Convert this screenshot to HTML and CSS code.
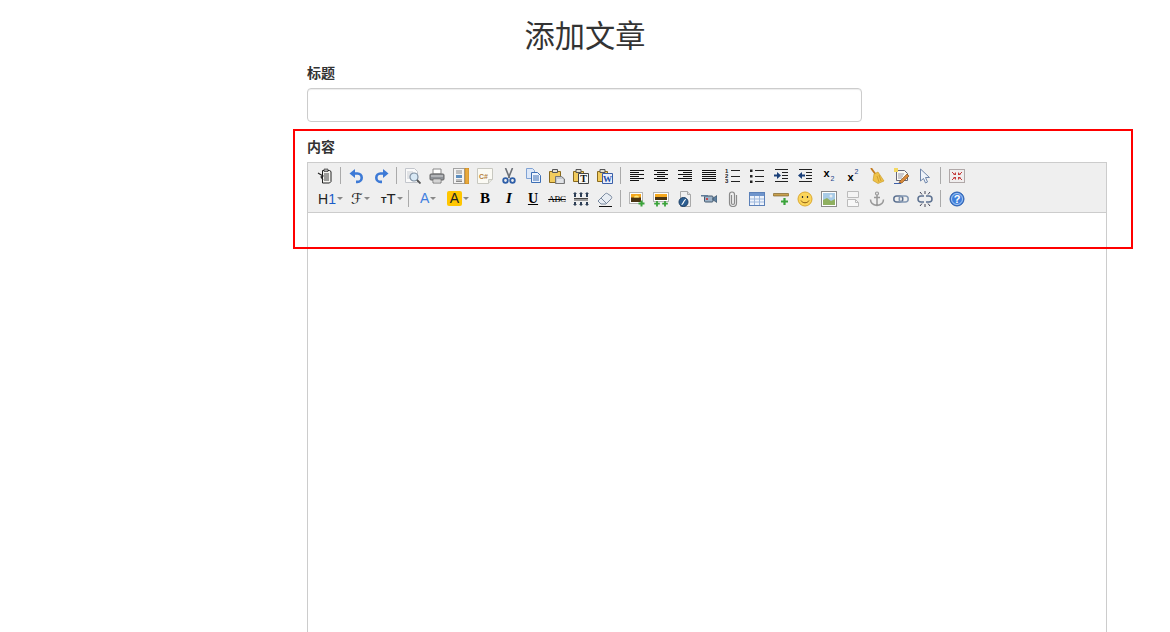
FILE: index.html
```html
<!DOCTYPE html>
<html lang="zh-CN">
<head>
    <meta charset="UTF-8">
    <title>添加文章</title>
    <link rel="stylesheet" href="styles.css">
</head>
<body>
<svg class="defs" width="0" height="0">
    <symbol id="i-template" viewBox="0 0 16 16"><path d="M5.500 2.500h7l1.500 1v10l-1.500 1.500h-7z" fill="#f4f4f0" stroke="#222"/><path d="M7 1h4v2.500H7z" fill="#aaa" stroke="#222" stroke-width=".6"/><path d="M7 6h5M7 8h5M7 10h5M7 12h5" stroke="#444"/><path d="M1 5l5 3-2 1 2 3" fill="none" stroke="#222" stroke-width="1.100"/></symbol>
    <symbol id="i-undo" viewBox="0 0 16 16"><path d="M5 5.500h3.500a4.200 4.200 0 0 1 0 8.400H7" fill="none" stroke="#3d7ad6" stroke-width="2.600"/><path d="M.5 5.500L6 1v9z" fill="#3d7ad6"/></symbol>
    <symbol id="i-redo" viewBox="0 0 16 16"><path d="M11 5.500H7.500a4.200 4.200 0 0 0 0 8.400H9" fill="none" stroke="#3d7ad6" stroke-width="2.600"/><path d="M15.500 5.500L10 1v9z" fill="#3d7ad6"/></symbol>
    <symbol id="i-preview" viewBox="0 0 16 16"><path d="M.5 .5h9l3 3v11H.500z" fill="#fafafa" stroke="#c3c6cc"/><path d="M2 4h6M2 6h4M2 8h3M2 10h3" stroke="#c8ccd2"/><circle cx="9" cy="9" r="4" fill="#d9e9f5" stroke="#7d8ea0" stroke-width="1.200"/><path d="M12 12l3.500 3.500" stroke="#555" stroke-width="1.800"/></symbol>
    <symbol id="i-print" viewBox="0 0 16 16"><path d="M4 1h8v5H4z" fill="#fff" stroke="#888"/><rect x="1" y="6" width="14" height="6" rx="1" fill="#8e9298" stroke="#666"/><path d="M2 8h12" stroke="#d8d8d8"/><path d="M4 11h8v4H4z" fill="#fff" stroke="#777"/><path d="M5 13h6" stroke="#aaa"/></symbol>
    <symbol id="i-ruler" viewBox="0 0 16 16"><path d="M.5 .5h11v15H.500z" fill="#f4f4f4" stroke="#555" stroke-dasharray="1 1"/><path d="M3 3h6M3 5h6M3 12h6M3 13.500h6" stroke="#888"/><rect x="3" y="7" width="6" height="3" fill="#5d8ebf"/><rect x="12" y="0" width="4" height="16" fill="#e8a93c" stroke="#b87c16" stroke-width=".6"/></symbol>
    <symbol id="i-cut" viewBox="0 0 16 16"><path d="M4.500 0l4 10M11.500 0l-4 10" stroke="#6d7178" stroke-width="1.600"/><circle cx="4.500" cy="12.500" r="2.300" fill="none" stroke="#2f5fa8" stroke-width="1.800"/><circle cx="11.500" cy="12.500" r="2.300" fill="none" stroke="#2f5fa8" stroke-width="1.800"/></symbol>
    <symbol id="i-copy" viewBox="0 0 16 16"><path d="M1.500 .5h6l2 2v8h-8z" fill="#dde8f8" stroke="#7fa2d4"/><path d="M6.500 4.500h6l3 3v7h-9z" fill="#eef4fd" stroke="#3d6fb5"/><path d="M8 8h6M8 10h6M8 12h6" stroke="#3d6fb5"/></symbol>
    <symbol id="i-paste" viewBox="0 0 16 16"><path d="M.5 3.500h11v11H.500z" fill="#f2cc5e" stroke="#8a6a1c"/><path d="M3.500 1.500h5v3h-5z" fill="#e4e0d0" stroke="#555"/><path d="M6.500 8.500h6l3 2.500v4.500h-9z" fill="#c4c8ce" stroke="#777"/><path d="M8 12h6M8 14h6" stroke="#fff"/></symbol>
    <symbol id="i-left" viewBox="0 0 16 16"><path d="M1 2.500h14M1 4.500h9M1 6.500h14M1 8.500h9M1 10.500h14M1 12.500h9" stroke="#111"/></symbol>
    <symbol id="i-center" viewBox="0 0 16 16"><path d="M1 2.500h14M4 4.500h8M1 6.500h14M4 8.500h8M1 10.500h14M4 12.500h8" stroke="#111"/></symbol>
    <symbol id="i-right" viewBox="0 0 16 16"><path d="M1 2.500h14M6 4.500h9M1 6.500h14M6 8.500h9M1 10.500h14M6 12.500h9" stroke="#111"/></symbol>
    <symbol id="i-just" viewBox="0 0 16 16"><path d="M1 2.500h14M1 4.500h14M1 6.500h14M1 8.500h14M1 10.500h14M1 12.500h14" stroke="#111"/></symbol>
    <symbol id="i-ul" viewBox="0 0 16 16"><path d="M1 1.500h2.500V4H1zM1 7h2.500v2.500H1zM1 12.500h2.500V15H1z" fill="#222"/><path d="M6 2.500h9M6 8.500h9M6 13.500h9" stroke="#222"/></symbol>
    <symbol id="i-indent" viewBox="0 0 16 16"><path d="M2 1.500h13M9 4.500h6M9 7.500h6M9 10.500h6M2 13.500h13" stroke="#222"/><path d="M1 6.500h3V4l4 3.500-4 3.500V8.500H1z" fill="#1a3f78"/></symbol>
    <symbol id="i-outdent" viewBox="0 0 16 16"><path d="M2 1.500h13M9 4.500h6M9 7.500h6M9 10.500h6M2 13.500h13" stroke="#222"/><path d="M8 6.500H5V4L1 7.500 5 11V8.500h3z" fill="#1a3f78"/></symbol>
    <symbol id="i-broom" viewBox="0 0 16 16"><path d="M2 0l5 7" stroke="#c27a1e" stroke-width="1.800"/><path d="M5 6l4-2 6 9-6 2.500-5-3z" fill="#efc24a" stroke="#c4951f" stroke-width=".6"/><path d="M8 8l2 6M10 7l2 6" stroke="#b98a1c" stroke-width=".6"/></symbol>
    <symbol id="i-note" viewBox="0 0 16 16"><path d="M3.500 2.500h8l3 3v7h-11z" fill="#fbfaf2" stroke="#667"/><path d="M5 6h6M5 8h5M5 10h4" stroke="#99a"/><path d="M1 0h4v4H1z" fill="#f4d860"/><path d="M7 13l7-7 2 2-7 7-3 0z" fill="#d98a3a" stroke="#7a4a18" stroke-width=".6"/><path d="M1 15.500h7" stroke="#3d5fa8"/></symbol>
    <symbol id="i-cursor" viewBox="0 0 16 16"><path d="M3.500 1v12l3-2.500 2 4.500 2-1-2-4.500h4z" fill="#eef3fa" stroke="#6f86aa"/></symbol>
    <symbol id="i-full" viewBox="0 0 16 16"><rect x=".5" y="1.500" width="15" height="13" fill="#f0eeee" stroke="#b0a8a8"/><path d="M3 4l2 2M13 4l-2 2M3 12l2-2M13 12l-2-2" stroke="#c43a3a"/><path d="M7 7H4l3-3zM9 7h3L9 4zM7 9H4l3 3zM9 9h3l-3 3z" fill="#c43a3a"/></symbol>
    <symbol id="i-spacing" viewBox="0 0 16 16"><path d="M1 7.500h14M1 9h14" stroke="#444"/><path d="M2 1l2 2H3v3H1V3H0zM8 1l2 2H9v3H7V3H6zM14 1l2 2h-1v3h-2V3h-1zM2 15l2-2H3v-2H1v2H0zM8 15l2-2H9v-2H7v2H6zM14 15l2-2h-1v-2h-2v2h-1z" fill="#2c3e55"/></symbol>
    <symbol id="i-eraser" viewBox="0 0 16 16"><path d="M1 10l7-7c1-1 2-1 3 0l3 2c1 1 1 2 0 3l-5 5H4z" fill="#e8edf3" stroke="#7a8aa0"/><path d="M4 7l5 5" stroke="#7a8aa0"/><path d="M2 15.500h13" stroke="#111"/></symbol>
    <symbol id="i-imgadd" viewBox="0 0 16 16"><rect x=".5" y="1.500" width="13" height="11" fill="#fff" stroke="#b5b5b5"/><rect x="2" y="3" width="10" height="8" fill="#4a3412"/><path d="M2 3h10v3.500H2z" fill="#f5a81e"/><path d="M5 6.500a2.500 2 0 0 1 5 0z" fill="#ffe97a"/><path d="M12.500 9.500v6M9.500 12.500h6" stroke="#3aa33a" stroke-width="2"/></symbol>
    <symbol id="i-imgsadd" viewBox="0 0 16 16"><rect x=".5" y="1.500" width="15" height="9" fill="#fff" stroke="#b5b5b5"/><rect x="2" y="3" width="12" height="6" fill="#4a3412"/><path d="M2 3h12v3H2z" fill="#f5a81e"/><path d="M4 10v5.500M1.200 12.700h5.600M12 10v5.500M9.200 12.700h5.600" stroke="#3aa33a" stroke-width="1.800"/></symbol>
    <symbol id="i-flash" viewBox="0 0 16 16"><path d="M3.500 .5h7l3 3v12h-10z" fill="#f0f0f0" stroke="#a9a9a9"/><path d="M10.500 .5v3h3" fill="#ddd" stroke="#a9a9a9"/><circle cx="6.500" cy="11" r="4.500" fill="#2d5f92" stroke="#1e3f66"/><path d="M4.500 13.500c2 0 2-5 4.500-5" fill="none" stroke="#fff" stroke-width="1.200"/></symbol>
    <symbol id="i-video" viewBox="0 0 16 16"><rect x="3.500" y="5" width="8.500" height="6" rx="1" fill="#9db3c8" stroke="#445a70"/><path d="M12 7l4-2.500v7L12 9z" fill="#5d7f9f" stroke="#34495e" stroke-width=".6"/><path d="M0 4h7v1.500H0z" fill="#5f7c99"/><circle cx="6" cy="8" r="1.100" fill="#c33"/></symbol>
    <symbol id="i-clip" viewBox="0 0 16 16"><path d="M6.500 4v8a1.500 1.500 0 0 0 3 0V3.500a2.500 2.500 0 0 0-5 0V12a3.500 3.500 0 0 0 7 0V4" fill="none" stroke="#8a8a8a" stroke-width="1.200"/></symbol>
    <symbol id="i-table" viewBox="0 0 16 16"><rect x=".5" y="1.500" width="15" height="13" fill="#eef3fb" stroke="#5b80b8"/><path d="M1 2h14v3H1z" fill="#6f95cc"/><path d="M5.500 5v9M10.500 5v9M1 8h14M1 11h14" stroke="#9db7dc"/></symbol>
    <symbol id="i-hr" viewBox="0 0 16 16"><rect x="0" y="2.500" width="16" height="2.500" rx="1" fill="#c8a050" stroke="#6b5218" stroke-width=".6"/><path d="M11.500 7v7M8 10.500h7" stroke="#3aa33a" stroke-width="2.200"/></symbol>
    <symbol id="i-smile" viewBox="0 0 16 16"><circle cx="8" cy="8" r="7" fill="#fbd55a" stroke="#dca92f"/><path d="M5.500 5v2M10.500 5v2" stroke="#333" stroke-width="1.200"/><path d="M4 9.500c1.500 3 6.500 3 8 0" fill="none" stroke="#8a5a12"/></symbol>
    <symbol id="i-image" viewBox="0 0 16 16"><rect x=".5" y=".5" width="15" height="15" fill="#fff" stroke="#8a8a8a"/><rect x="2" y="2" width="12" height="12" fill="#a8cbe6"/><path d="M2 14V9l4-2 4 3 4-2v6z" fill="#8fb060"/><circle cx="10" cy="5" r="1.500" fill="#e7edf2"/></symbol>
    <symbol id="i-break" viewBox="0 0 16 16"><path d="M2.500 .5h11v6h-11z" fill="#f4f4f4" stroke="#bbb"/><path d="M2.500 8.500h8l3 3v4h-11z" fill="#f8f8f8" stroke="#bbb"/><path d="M10.500 8.500v3h3" fill="none" stroke="#bbb"/></symbol>
    <symbol id="i-anchor" viewBox="0 0 16 16"><circle cx="8" cy="2.500" r="1.500" fill="none" stroke="#999" stroke-width="1.200"/><path d="M8 4v10M5 6.500h6M1.500 8.500c0 4 3 5.500 6.500 6 3.500-.5 6.500-2 6.500-6" fill="none" stroke="#999" stroke-width="1.500"/></symbol>
    <symbol id="i-link" viewBox="0 0 16 16"><rect x=".8" y="5" width="9" height="6" rx="3" fill="none" stroke="#5d7291" stroke-width="1.500"/><rect x="6.200" y="5" width="9" height="6" rx="3" fill="none" stroke="#8498b3" stroke-width="1.500"/></symbol>
    <symbol id="i-unlink" viewBox="0 0 16 16"><path d="M7 5H4a3 3 0 0 0 0 6h3M9 5h3a3 3 0 0 1 0 6H9" fill="none" stroke="#5d7291" stroke-width="1.500"/><path d="M8 0v3M8 13v3M3 1l2 2.500M13 1l-2 2.500M3 15l2-2.500M13 15l-2-2.500" stroke="#445"/></symbol>
</svg>

<h1 class="page-title">添加文章</h1>
<form class="post-form">
    <div class="field">
        <label class="field-label">标题</label>
        <input class="field-input" type="text">
    </div>
    <div class="field">
        <label class="field-label">内容</label>
        <div class="editor">
            <div class="toolbar">
                <div class="toolbar-row">
                    <span class="btn"><svg><use href="#i-template"/></svg></span>
                    <span class="sep"></span>
                    <span class="btn"><svg><use href="#i-undo"/></svg></span>
                    <span class="btn"><svg><use href="#i-redo"/></svg></span>
                    <span class="sep"></span>
                    <span class="btn"><svg><use href="#i-preview"/></svg></span>
                    <span class="btn"><svg><use href="#i-print"/></svg></span>
                    <span class="btn"><svg><use href="#i-ruler"/></svg></span>
                    <span class="btn"><svg viewBox="0 0 16 16"><path d="M.5 .5h15v11l-4 4H.500z" fill="#fbfaf4" stroke="#c8c8c0"/><path d="M11.500 15.500v-4h4" fill="#e6e6df" stroke="#c8c8c0"/><text x="2" y="10.500" class="svg-code">C#</text></svg></span>
                    <span class="btn"><svg><use href="#i-cut"/></svg></span>
                    <span class="btn"><svg><use href="#i-copy"/></svg></span>
                    <span class="btn"><svg><use href="#i-paste"/></svg></span>
                    <span class="btn"><svg viewBox="0 0 16 16"><path d="M.5 3.500h10v10H.500z" fill="#f2cc5e" stroke="#8a6a1c"/><path d="M3 1.500h5v3H3z" fill="#e4e0d0" stroke="#555"/><path d="M5.500 5.500h10v10h-10z" fill="#f8f8f4" stroke="#444"/><text x="10.500" y="14" class="svg-paste">T</text></svg></span>
                    <span class="btn"><svg viewBox="0 0 16 16"><path d="M.5 3.500h10v10H.500z" fill="#f2cc5e" stroke="#8a6a1c"/><path d="M3 1.500h5v3H3z" fill="#e4e0d0" stroke="#555"/><path d="M5.500 5.500h10v10h-10z" fill="#e9eefa" stroke="#3a5ea8"/><text x="10.500" y="14" class="svg-paste svg-blue">W</text></svg></span>
                    <span class="sep"></span>
                    <span class="btn"><svg><use href="#i-left"/></svg></span>
                    <span class="btn"><svg><use href="#i-center"/></svg></span>
                    <span class="btn"><svg><use href="#i-right"/></svg></span>
                    <span class="btn"><svg><use href="#i-just"/></svg></span>
                    <span class="btn"><svg viewBox="0 0 16 16"><text x="0" y="5" class="svg-num">1</text><text x="0" y="10" class="svg-num">2</text><text x="0" y="15" class="svg-num">3</text><path d="M6 2.500h9M6 8.500h9M6 13.500h9" stroke="#222"/></svg></span>
                    <span class="btn"><svg><use href="#i-ul"/></svg></span>
                    <span class="btn"><svg><use href="#i-indent"/></svg></span>
                    <span class="btn"><svg><use href="#i-outdent"/></svg></span>
                    <span class="btn script-btn script-sub"><b>x</b><sub>2</sub></span>
                    <span class="btn script-btn script-sup"><b>x</b><sup>2</sup></span>
                    <span class="btn"><svg><use href="#i-broom"/></svg></span>
                    <span class="btn"><svg><use href="#i-note"/></svg></span>
                    <span class="btn"><svg><use href="#i-cursor"/></svg></span>
                    <span class="sep"></span>
                    <span class="btn"><svg><use href="#i-full"/></svg></span>
                </div>
                <div class="toolbar-row">
                    <span class="combo combo-wide combo-h">H<b>1</b><i class="caret"></i></span>
                    <span class="combo combo-wide combo-f">ℱ<i class="caret"></i></span>
                    <span class="combo combo-t"><small>T</small>T<i class="caret"></i></span>
                    <span class="sep"></span>
                    <span class="combo combo-color"><span class="swatch">A</span><i class="caret"></i></span>
                    <span class="combo combo-mark"><span class="swatch">A</span><i class="caret"></i></span>
                    <span class="btn glyph bold">B</span>
                    <span class="btn glyph italic">I</span>
                    <span class="btn glyph under">U</span>
                    <span class="btn glyph strike">ABC</span>
                    <span class="btn"><svg><use href="#i-spacing"/></svg></span>
                    <span class="btn"><svg><use href="#i-eraser"/></svg></span>
                    <span class="sep"></span>
                    <span class="btn"><svg><use href="#i-imgadd"/></svg></span>
                    <span class="btn"><svg><use href="#i-imgsadd"/></svg></span>
                    <span class="btn"><svg><use href="#i-flash"/></svg></span>
                    <span class="btn"><svg><use href="#i-video"/></svg></span>
                    <span class="btn"><svg><use href="#i-clip"/></svg></span>
                    <span class="btn"><svg><use href="#i-table"/></svg></span>
                    <span class="btn"><svg><use href="#i-hr"/></svg></span>
                    <span class="btn"><svg><use href="#i-smile"/></svg></span>
                    <span class="btn"><svg><use href="#i-image"/></svg></span>
                    <span class="btn"><svg><use href="#i-break"/></svg></span>
                    <span class="btn"><svg><use href="#i-anchor"/></svg></span>
                    <span class="btn"><svg><use href="#i-link"/></svg></span>
                    <span class="btn"><svg><use href="#i-unlink"/></svg></span>
                    <span class="sep"></span>
                    <span class="btn"><svg viewBox="0 0 16 16"><circle cx="8" cy="8" r="7" fill="#3f7fdc" stroke="#2a5cab"/><circle cx="8" cy="8" r="5.500" fill="none" stroke="#a9c9f2"/><text x="8" y="11.500" class="svg-help">?</text></svg></span>
                </div>
            </div>
            <div class="editor-body"></div>
        </div>
    </div>
</form>
<div class="highlight-box"></div>
</body>
</html>
```

FILE: styles.css
```css
html, body {
    height: 632px;
    overflow: hidden;
}
body {
    margin: 0;
    position: relative;
    background-color: #fff;
    color: #333;
    font-family: "Liberation Sans", "Noto Sans CJK SC", sans-serif;
    font-size: 14px;
}
.defs {
    position: absolute;
}
.page-title {
    margin: 0;
    padding-top: 16px;
    height: 47px;
    line-height: 42px;
    text-align: center;
    font-size: 30.25px;
    font-weight: 400;
}
.post-form {
    width: 800px;
    margin-left: 307px;
}
.field {
    margin-bottom: 15px;
}
.field-label {
    display: block;
    height: 25px;
    line-height: 20px;
    font-weight: 700;
    font-size: 14px;
}
.field-input {
    display: block;
    box-sizing: border-box;
    width: 555px;
    height: 34px;
    border: 1px solid #ccc;
    border-radius: 4px;
    box-shadow: inset 0 1px 1px rgba(0, 0, 0, 0.075);
}
.editor {
    border: 1px solid #ccc;
    box-sizing: border-box;
}
.toolbar {
    height: 50px;
    box-sizing: border-box;
    padding: 1px 0 0 5px;
    background-color: #efefef;
    border-bottom: 1px solid #ccc;
}
.toolbar-row {
    display: flex;
    height: 23px;
    align-items: center;
}
.btn {
    display: flex;
    flex: none;
    align-items: center;
    justify-content: center;
    width: 24px;
    height: 20px;
    color: #111;
}
.btn svg {
    width: 16px;
    height: 16px;
}
.sep {
    flex: none;
    width: 8px;
    height: 17px;
    background: linear-gradient(#aaa, #aaa) 3px 0 / 1px 100% no-repeat;
}
.combo {
    display: flex;
    flex: none;
    box-sizing: border-box;
    align-items: center;
    width: 30px;
    height: 20px;
    color: #222;
}
.combo-wide {
    width: 31px;
}
.caret {
    flex: none;
    width: 0;
    height: 0;
    margin-left: 1px;
    border: 3px solid transparent;
    border-top: 3px solid #888;
    border-bottom: 0;
}
.combo-h {
    padding-left: 5px;
    font-size: 14px;
}
.combo-h b {
    font-weight: 400;
    color: #1a5cc8;
}
.combo-f {
    padding-left: 7px;
    font-family: "DejaVu Serif", "DejaVu Sans", serif;
    font-size: 15px;
}
.combo-t {
    padding-left: 6px;
    font-size: 15px;
}
.combo-t small {
    font-size: 9px;
    font-weight: 700;
    line-height: 1;
    margin-top: 4px;
}
.combo-color {
    padding-left: 7px;
}
.combo-mark {
    padding-left: 4px;
}
.swatch {
    display: block;
    font-size: 14px;
    line-height: 15px;
    text-align: center;
    color: #3f7ee0;
}
.combo-mark .swatch {
    width: 15px;
    border-radius: 2px;
    background-color: #ffc600;
    color: #222;
}
.glyph {
    font-family: "Liberation Serif", serif;
}
.bold {
    font-size: 15px;
    font-weight: 700;
    color: #000;
}
.italic {
    font-size: 15px;
    font-weight: 700;
    font-style: italic;
    color: #000;
}
.under {
    font-size: 14px;
    font-weight: 700;
    text-decoration: underline;
    color: #000;
}
.strike {
    font-size: 9px;
    letter-spacing: -0.3px;
    text-decoration: line-through;
    color: #000;
}
.script-btn {
    font-size: 11px;
    line-height: 11px;
    color: #000;
}
.script-btn sub, .script-btn sup {
    margin-left: 1px;
    font-size: 7px;
    line-height: 8px;
    color: #1a3f88;
}
.script-sub b {
    margin-bottom: 4px;
}
.script-sub sub {
    margin-top: 7px;
}
.script-sup b {
    margin-top: 4px;
}
.script-sup sup {
    margin-bottom: 7px;
}
.editor-body {
    height: 500px;
    background-color: #fff;
}
.highlight-box {
    position: absolute;
    left: 293px;
    top: 129px;
    box-sizing: border-box;
    width: 840px;
    height: 120px;
    border: 2px solid #f00;
}
svg text {
    font-family: "Liberation Sans", sans-serif;
}
.svg-code {
    font-size: 7px;
    font-weight: 700;
    fill: #b5813a;
}
.svg-paste {
    font-family: "Liberation Serif", serif;
    font-size: 10px;
    font-weight: 700;
    fill: #111;
    text-anchor: middle;
}
.svg-blue {
    font-size: 9px;
    fill: #1c4da8;
}
.svg-num {
    font-size: 6px;
    font-weight: 700;
    fill: #222;
}
.svg-help {
    font-size: 11px;
    font-weight: 700;
    fill: #fff;
    text-anchor: middle;
}
```
